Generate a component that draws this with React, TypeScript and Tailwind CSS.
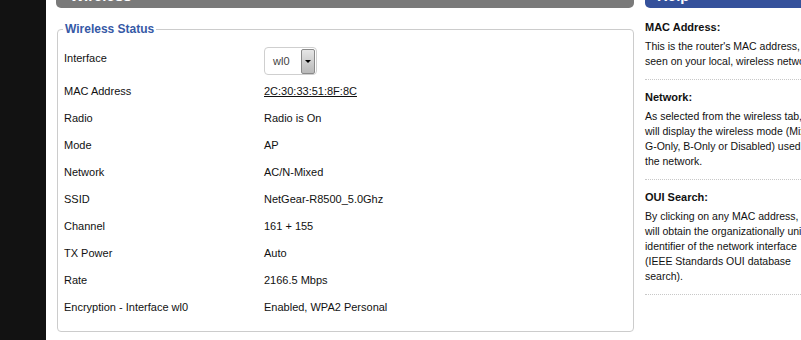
import * as React from "react";

const rows: [string, string][] = [
  ["Radio", "Radio is On"],
  ["Mode", "AP"],
  ["Network", "AC/N-Mixed"],
  ["SSID", "NetGear-R8500_5.0Ghz"],
  ["Channel", "161 + 155"],
  ["TX Power", "Auto"],
  ["Rate", "2166.5 Mbps"],
  ["Encryption - Interface wl0", "Enabled, WPA2 Personal"],
];

const help: { title: string; lines: string[] }[] = [
  {
    title: "MAC Address:",
    lines: ["This is the router's MAC address, as", "seen on your local, wireless network."],
  },
  {
    title: "Network:",
    lines: [
      "As selected from the wireless tab, this",
      "will display the wireless mode (Mixed,",
      "G-Only, B-Only or Disabled) used by",
      "the network.",
    ],
  },
  {
    title: "OUI Search:",
    lines: [
      "By clicking on any MAC address, you",
      "will obtain the organizationally unique",
      "identifier of the network interface",
      "(IEEE Standards OUI database",
      "search).",
    ],
  },
];

export default function App() {
  return (
    <div className="flex w-[801px] h-[340px] overflow-hidden bg-white text-[#111] font-['Liberation_Sans',Arial,sans-serif]">
      <div className="w-[46px] shrink-0 bg-[#121212]" />

      {/* main column */}
      <div className="ml-[10px] w-[578px] shrink-0 flex flex-col">
        <div className="-mt-[22px] h-[30px] rounded-b-[5px] bg-[#7a7a7a] pl-[14px] text-[15px] font-bold leading-[36px] text-white">
          Wireless
        </div>

        <fieldset className="mt-[14px] ml-[1px] rounded-[4px] border border-[#cccccc] pl-[6px] pt-[7px] pb-[10px]">
          <legend className="-ml-[1px] px-[2px] text-[12px] font-bold leading-[15px] text-[#3659a6]">
            Wireless Status
          </legend>

          <div className="flex h-[34px] text-[11px]">
            <div className="w-[200px] mt-[7px] h-[15px] leading-[15px]">Interface</div>
            <div className="mt-[3px] flex h-[28px] w-[53px] items-center rounded-[4px] border border-[#cfcfcf] bg-white pl-[8px] pr-[1px]">
              <span className="flex-1 text-[11px] text-[#444]">wl0</span>
              <span className="flex h-[25px] w-[14px] items-center justify-center rounded-[2px] border border-[#8a8a8a] bg-gradient-to-b from-[#e6e6e6] to-[#b9b9b9]">
                <span className="h-0 w-0 border-x-[3px] border-t-[3px] border-x-transparent border-t-black" />
              </span>
            </div>
          </div>

          <div className="flex h-[27px] items-center text-[11px]">
            <div className="w-[200px]">MAC Address</div>
            <div className="underline">2C:30:33:51:8F:8C</div>
          </div>

          {rows.map(([k, v]) => (
            <div key={k} className="flex h-[27px] items-center text-[11px]">
              <div className="w-[200px]">{k}</div>
              <div>{v}</div>
            </div>
          ))}
        </fieldset>
      </div>

      {/* help column */}
      <div className="ml-[11px] w-[200px] shrink-0 flex flex-col">
        <div className="-mt-[22px] flex h-[30px] justify-between rounded-bl-[5px] bg-[#35519b] pl-[12px] pr-[4px] text-[15px] font-bold leading-[36px] text-white">
          <span>Help</span>
          <span className="font-normal text-[12px]">more...</span>
        </div>

        <div className="mt-[12px] text-[10.5px] leading-[15px]">
          {help.map((h, i) => (
            <div key={h.title} className={i > 0 ? "mt-[10px]" : ""}>
              <div className="mb-[4px] text-[11px] font-bold">{h.title}</div>
              {h.lines.map((l) => (
                <div key={l} className="whitespace-nowrap">{l}</div>
              ))}
              <div className="mt-[10px] border-t border-dotted border-[#c8c8c8]" />
            </div>
          ))}
        </div>
      </div>
    </div>
  );
}
